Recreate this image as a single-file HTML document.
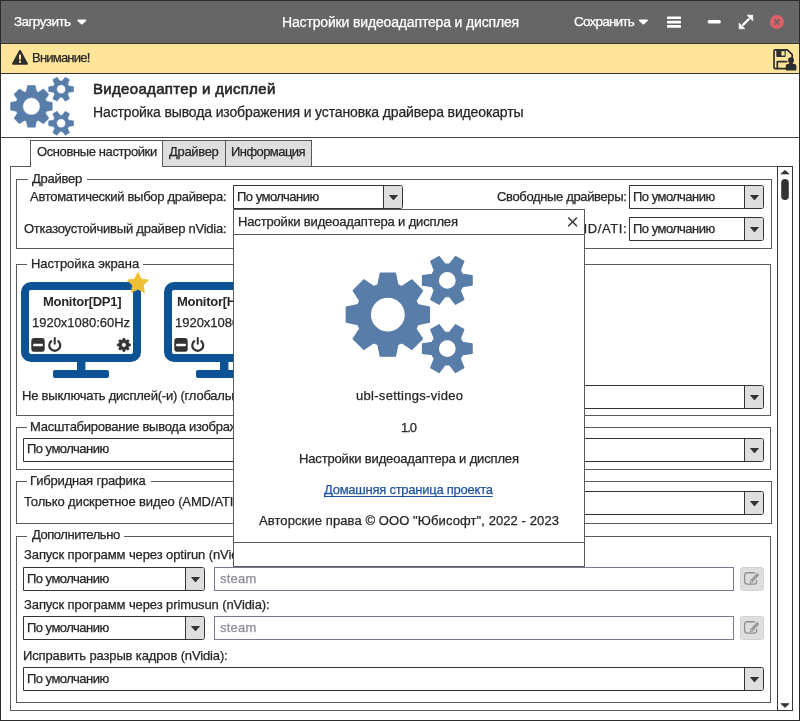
<!DOCTYPE html>
<html lang="ru"><head><meta charset="utf-8"><title>Настройки видеоадаптера и дисплея</title>
<style>
*{box-sizing:border-box;margin:0;padding:0}
html,body{width:800px;height:721px;overflow:hidden;background:#fff}
body{font-family:"Liberation Sans",sans-serif;font-size:13px;color:#262626;position:relative}
.a{position:absolute}
.t{will-change:transform;-webkit-text-stroke:0.25px currentColor;position:absolute;white-space:nowrap;line-height:20px;height:20px}
#win{position:absolute;left:0;top:0;width:800px;height:721px;background:#fff;overflow:hidden}
.wb{position:absolute;background:#2b2b2b}
#tb{position:absolute;left:0;top:0;width:800px;height:43px;background:#666666}
#tbl{position:absolute;left:0;top:43px;width:800px;height:1px;background:#333}
#warn{position:absolute;left:0;top:44px;width:800px;height:29px;background:#ffe599}
#warnl{position:absolute;left:0;top:73px;width:800px;height:1px;background:#333}
#hdl{position:absolute;left:0;top:137px;width:800px;height:1px;background:#444}
.fr{position:absolute;border:1px solid #5a5a5a;background:transparent}
.lg{position:absolute;background:#fff;height:3px}
.cb{position:absolute;height:24px;border:1px solid #333;border-radius:0 2.5px 2.5px 0;background:#fff}
.cb i{position:absolute;right:0;top:0;width:19px;height:22px;border-left:1px solid #333;background:#dedede;border-radius:0 1.5px 1.5px 0}
.cb i:after{content:"";position:absolute;left:4.8px;top:8.7px;width:9.4px;height:5.4px;background:#333;clip-path:polygon(0 6%,4% 0,96% 0,100% 6%,54% 100%,46% 100%)}
.en{position:absolute;height:23px;border:1px solid #7c7c8e;background:#fff}
.eb{position:absolute;width:24px;height:24px;border:1px solid #d2d2d2;border-radius:3px;background:#dedede}
.tab{position:absolute;top:140px;height:27px;border:1px solid #5a5a5a;background:#dedede}
</style></head><body>
<div id="win">
<div id="tb"></div><div id="tbl"></div><div id="warn"></div><div id="warnl"></div><div id="hdl"></div>

<!-- titlebar icons -->
<svg class="a" style="left:0;top:0" width="800" height="44" viewBox="0 0 800 44">
 <path d="M78.2 19.6 h7.2 a0.9 0.9 0 0 1 0.65 1.5 l-3.6 3.2 a0.9 0.9 0 0 1 -1.3 0 l-3.6 -3.2 a0.9 0.9 0 0 1 0.65 -1.5z" fill="#fff"/>
 <path d="M639.8 19.5 h7.2 a0.9 0.9 0 0 1 0.65 1.5 l-3.6 3.2 a0.9 0.9 0 0 1 -1.3 0 l-3.6 -3.2 a0.9 0.9 0 0 1 0.65 -1.5z" fill="#fff"/>
 <g fill="#fff"><rect x="667" y="16.4" width="14" height="2.7" rx="0.6"/><rect x="667" y="20.75" width="14" height="2.7" rx="0.6"/><rect x="667" y="25.1" width="14" height="2.7" rx="0.6"/></g>
 <rect x="707.6" y="20" width="13.2" height="3.6" rx="1.6" fill="#fff"/>
 <g stroke="#fff" fill="#fff">
  <path d="M742.5 25.4 L749.4 18.5" fill="none" stroke-width="2.3"/>
  <path d="M747.2 15.2 h5.5 v5.5z" stroke-width="0.8" stroke-linejoin="round"/>
  <path d="M739.2 23.2 v5.5 h5.5z" stroke-width="0.8" stroke-linejoin="round"/>
 </g>
 <circle cx="776.9" cy="22" r="6.9" fill="#e06068"/>
 <path d="M774.8 19.9 l4.2 4.2 M779 19.9 l-4.2 4.2" stroke="#666666" stroke-width="2" stroke-linecap="round"/>
</svg>

<!-- banner icons -->
<svg class="a" style="left:0;top:44px" width="800" height="29" viewBox="0 44 800 29">
 <path d="M20.9 50.5 L27.7 63.1 a1.1 1.1 0 0 1 -1 1.7 H13.3 a1.1 1.1 0 0 1 -1 -1.7 L19.1 50.5 a1.05 1.05 0 0 1 1.8 0z" fill="#2e2e2e"/>
 <rect x="19" y="54.6" width="2" height="5" fill="#ffe599"/><rect x="19" y="60.7" width="2" height="2" fill="#ffe599"/>
 <!-- save icon -->
 <g fill="none" stroke="#2e2e2e" stroke-width="1.7" stroke-linejoin="round">
  <path d="M775.2 49.9 h12.2 l4.8 4.8 v8 M786 68.6 h-10.8 a1.2 1.2 0 0 1 -1.2 -1.2 v-16.3 a1.2 1.2 0 0 1 1.2 -1.2"/>
  <path d="M777.3 68.6 v-6.9 h10"/>
 </g>
 <rect x="776.3" y="49.6" width="9.4" height="7.3" rx="0.9" fill="#2e2e2e"/>
 <rect x="781.4" y="51.2" width="3.2" height="4.4" fill="#ffe599"/>
 <circle cx="791" cy="60.3" r="3" fill="#2e2e2e"/><rect x="789.2" y="62" width="3.6" height="3" fill="#2e2e2e"/>
 <path d="M785.7 69.4 v-2.9 a2.8 2.8 0 0 1 2.8 -2.8 h5.1 a2.8 2.8 0 0 1 2.8 2.8 v2.9 a1.2 1.2 0 0 1 -1.2 1.2 h-8.3 a1.2 1.2 0 0 1 -1.2 -1.2z" fill="#2e2e2e"/>
</svg>

<!-- header gears (half-size) -->
<svg class="a" style="left:10px;top:73.5px" width="64" height="64" viewBox="0 0 128 128">
 <g fill="#587da9" stroke="#587da9" stroke-width="1.2" stroke-linejoin="round" fill-rule="evenodd">
 <path d="M72.72 54.65 L84.47 57.09 L84.47 72.21 L72.72 74.65 L71.04 78.71 L77.63 88.73 L66.93 99.43 L56.91 92.84 L52.85 94.52 L50.41 106.27 L35.29 106.27 L32.85 94.52 L28.79 92.84 L18.77 99.43 L8.07 88.73 L14.66 78.71 L12.98 74.65 L1.23 72.21 L1.23 57.09 L12.98 54.65 L14.66 50.59 L8.07 40.57 L18.77 29.87 L28.79 36.46 L32.85 34.78 L35.29 23.03 L50.41 23.03 L52.85 34.78 L56.91 36.46 L66.93 29.87 L77.63 40.57 L71.04 50.59 Z M25.35 64.65 a17.50 17.50 0 1 0 35.00 0 a17.50 17.50 0 1 0 -35.00 0 Z"/><path d="M117.60 24.22 L127.14 25.57 L127.14 35.23 L117.60 36.58 L115.30 40.56 L118.90 49.49 L110.54 54.32 L104.60 46.74 L100.00 46.74 L94.06 54.32 L85.70 49.49 L89.30 40.56 L87.00 36.58 L77.46 35.23 L77.46 25.57 L87.00 24.22 L89.30 20.24 L85.70 11.31 L94.06 6.48 L100.00 14.06 L104.60 14.06 L110.54 6.48 L118.90 11.31 L115.30 20.24 Z M93.30 30.40 a9.00 9.00 0 1 0 18.00 0 a9.00 9.00 0 1 0 -18.00 0 Z"/><path d="M117.60 92.42 L127.14 93.77 L127.14 103.43 L117.60 104.78 L115.30 108.76 L118.90 117.69 L110.54 122.52 L104.60 114.94 L100.00 114.94 L94.06 122.52 L85.70 117.69 L89.30 108.76 L87.00 104.78 L77.46 103.43 L77.46 93.77 L87.00 92.42 L89.30 88.44 L85.70 79.51 L94.06 74.68 L100.00 82.26 L104.60 82.26 L110.54 74.68 L118.90 79.51 L115.30 88.44 Z M93.30 98.60 a9.00 9.00 0 1 0 18.00 0 a9.00 9.00 0 1 0 -18.00 0 Z"/></g>
</svg>

<!-- notebook -->
<div class="a" style="left:10px;top:166px;width:783px;height:545px;border:1px solid #5a5a5a"></div>
<div class="tab" style="left:30px;width:133px;height:27px;background:#fff;border-bottom:none"></div><div class="a" style="left:31px;top:166px;width:131px;height:1px;background:#fff"></div>
<div class="tab" style="left:162px;width:64px"></div>
<div class="tab" style="left:225px;width:87px"></div>
<!-- scrollbar -->
<div class="a" style="left:777px;top:166px;width:16px;height:545px;border:1px solid #383838"></div>
<svg class="a" style="left:778px;top:167px" width="14" height="543" viewBox="0 0 14 543">
 <path d="M7 3.2 L11.2 7 H2.8z" fill="#333" stroke="#333" stroke-width="0.6" stroke-linejoin="round"/>
 <rect x="3.2" y="12" width="7.6" height="21" rx="3.8" fill="#333"/>
 <path d="M7 540.6 L11.2 536.6 H2.8z" fill="#333" stroke="#333" stroke-width="0.6" stroke-linejoin="round"/>
</svg>

<!-- frames -->
<div class="fr" style="left:16px;top:179px;width:756px;height:70px"></div>
<div class="lg" style="left:28px;top:178px;width:59px"></div>
<div class="fr" style="left:16px;top:264px;width:755px;height:152px"></div>
<div class="lg" style="left:27px;top:263px;width:116px"></div>
<div class="fr" style="left:16px;top:427px;width:755px;height:43px"></div>
<div class="lg" style="left:27px;top:426px;width:240px"></div>
<div class="fr" style="left:16px;top:481px;width:756px;height:43px"></div>
<div class="lg" style="left:27px;top:480px;width:124px"></div>
<div class="fr" style="left:16px;top:536px;width:755px;height:167px"></div>
<div class="lg" style="left:27px;top:535px;width:97px"></div>

<!-- combos -->
<div class="cb" style="left:233px;top:185px;width:170px"><i></i></div>
<div class="cb" style="left:629px;top:185px;width:135px"><i></i></div>
<div class="cb" style="left:233px;top:217px;width:170px"><i></i></div>
<div class="cb" style="left:629px;top:217px;width:135px"><i></i></div>
<div class="cb" style="left:260px;top:385px;width:504px"><i></i></div>
<div class="cb" style="left:23px;top:438px;width:741px"><i></i></div>
<div class="cb" style="left:300px;top:491px;width:464px"><i></i></div>
<div class="cb" style="left:23px;top:567px;width:182px"><i></i></div>
<div class="cb" style="left:23px;top:616px;width:182px"><i></i></div>
<div class="cb" style="left:23px;top:667px;width:741px"><i></i></div>
<div class="en" style="left:214px;top:567px;width:520px;height:24px"></div>
<div class="en" style="left:214px;top:616px;width:520px;height:24px"></div>
<div class="eb" style="left:740px;top:567px"></div>
<div class="eb" style="left:740px;top:616px"></div>
<svg class="a" style="left:740px;top:567px" width="24" height="24" viewBox="0 0 24 24"><use href="#edit"/></svg>
<svg class="a" style="left:740px;top:616px" width="24" height="24" viewBox="0 0 24 24"><use href="#edit"/></svg>
<svg width="0" height="0" style="position:absolute"><defs>
 <g id="edit" fill="none" stroke="#8f8f8f" stroke-linejoin="round">
  <path d="M14.6 5.75 H7.15 a2.5 2.5 0 0 0 -2.5 2.5 v6.35 a2.5 2.5 0 0 0 2.5 2.5 h7 a2.5 2.5 0 0 0 2.5 -2.5 V13.4" stroke-width="1.3" stroke-linecap="round"/>
  <path d="M11.9 13.9 L18.2 6.9" stroke-width="3.1" stroke="#9a9a9a"/>
  <path d="M10.2 15.8 l0.5 -2.9 2.3 2.1z" fill="#8f8f8f" stroke-width="0.8"/>
  <circle cx="11.5" cy="14.4" r="0.7" fill="#e4e4e4" stroke="none"/>
 </g>
 <g id="mon">
  <rect x="4" y="4" width="112" height="72" rx="6" fill="#fff" stroke="#0b5394" stroke-width="8"/>
  <rect x="56" y="80" width="8.4" height="8.5" fill="#0b5394"/>
  <rect x="32" y="88" width="56" height="8" rx="2" fill="#0b5394"/>
  <rect x="10.3" y="56.1" width="13.4" height="13.6" rx="2.8" fill="#333"/>
  <rect x="12.1" y="61.75" width="9.8" height="2.6" rx="0.8" fill="#fff"/>
  <g fill="none" stroke="#333" stroke-width="2.2" stroke-linecap="round">
   <path d="M30.21 59.09 a5.5 5.5 0 1 0 7.08 0"/><path d="M33.75 56.1 v5.7" stroke-width="2"/>
  </g>
 </g>
</defs></svg>

<!-- monitors -->
<svg class="a" style="left:21px;top:282px" width="120" height="97" viewBox="0 0 120 97"><use href="#mon"/>
 <g transform="translate(102.9,62.9)" fill="#333" stroke="#333" stroke-width="0.6" stroke-linejoin="round" fill-rule="evenodd"><path d="M4.97 -1.33 L6.63 -0.93 L6.63 0.93 L4.97 1.33 L4.46 2.58 L5.35 4.03 L4.03 5.35 L2.58 4.46 L1.33 4.97 L0.93 6.63 L-0.93 6.63 L-1.33 4.97 L-2.57 4.46 L-4.03 5.35 L-5.35 4.03 L-4.46 2.57 L-4.97 1.33 L-6.63 0.93 L-6.63 -0.93 L-4.97 -1.33 L-4.46 -2.57 L-5.35 -4.03 L-4.03 -5.35 L-2.58 -4.46 L-1.33 -4.97 L-0.93 -6.63 L0.93 -6.63 L1.33 -4.97 L2.58 -4.46 L4.03 -5.35 L5.35 -4.03 L4.46 -2.58 Z M-2.30 0.00 a2.30 2.30 0 1 0 4.60 0 a2.30 2.30 0 1 0 -4.60 0 Z"/></g>
</svg>
<svg class="a" style="left:164px;top:282px" width="120" height="97" viewBox="0 0 120 97"><use href="#mon"/></svg>
<svg class="a" style="left:126px;top:270px" width="24" height="24" viewBox="0 0 24 24">
 <path d="M11.90 2.45 L15.19 9.02 L22.46 10.12 L17.23 15.28 L18.42 22.53 L11.90 19.15 L5.38 22.53 L6.57 15.28 L1.34 10.12 L8.61 9.02Z" fill="#efc035" stroke="#efc035" stroke-width="0.9" stroke-linejoin="round"/>
</svg>

<div class="t" style="left:14.00px;top:12.00px;font-size:13.5px;color:#ffffff;letter-spacing:-0.576px;">Загрузить</div>
<div class="t" style="left:282.00px;top:12.00px;font-size:14px;color:#ffffff;letter-spacing:-0.156px;">Настройки видеоадаптера и дисплея</div>
<div class="t" style="left:574.30px;top:12.00px;font-size:13.5px;color:#ffffff;letter-spacing:-0.794px;">Сохранить</div>
<div class="t" style="left:31.75px;top:48.00px;font-size:13px;color:#262626;letter-spacing:-0.788px;">Внимание!</div>
<div class="t" style="left:93.00px;top:79.00px;font-size:15px;color:#262626;letter-spacing:0.318px;-webkit-text-stroke:0.6px #262626;">Видеоадаптер и дисплей</div>
<div class="t" style="left:93.00px;top:102.00px;font-size:14px;color:#262626;letter-spacing:-0.134px;">Настройка вывода изображения и установка драйвера видеокарты</div>
<div class="t" style="left:36.60px;top:142.00px;font-size:13px;color:#262626;letter-spacing:-0.392px;">Основные настройки</div>
<div class="t" style="left:169.00px;top:142.00px;font-size:13px;color:#262626;letter-spacing:-0.319px;">Драйвер</div>
<div class="t" style="left:230.50px;top:142.00px;font-size:13px;color:#262626;letter-spacing:-0.562px;">Информация</div>
<div class="t" style="left:32.00px;top:169.00px;font-size:13px;color:#262626;letter-spacing:-0.253px;">Драйвер</div>
<div class="t" style="left:30.00px;top:187.00px;font-size:13px;color:#262626;letter-spacing:-0.285px;">Автоматический выбор драйвера:</div>
<div class="t" style="left:236.50px;top:187.00px;font-size:13px;color:#262626;letter-spacing:-0.515px;">По умолчанию</div>
<div class="t" style="left:496.80px;top:187.00px;font-size:13px;color:#262626;letter-spacing:-0.355px;">Свободные драйверы:</div>
<div class="t" style="left:632.50px;top:187.00px;font-size:13px;color:#262626;letter-spacing:-0.515px;">По умолчанию</div>
<div class="t" style="left:24.00px;top:219.00px;font-size:13px;color:#262626;letter-spacing:-0.238px;">Отказоустойчивый драйвер nVidia:</div>
<div class="t" style="left:567.00px;top:219.00px;font-size:13px;color:#262626;letter-spacing:0.606px;">AMD/ATI:</div>
<div class="t" style="left:632.50px;top:219.00px;font-size:13px;color:#262626;letter-spacing:-0.515px;">По умолчанию</div>
<div class="t" style="left:30.50px;top:254.00px;font-size:13px;color:#262626;letter-spacing:-0.045px;">Настройка экрана</div>
<div class="t" style="left:43.00px;top:292.00px;font-size:13px;color:#262626;font-weight:700;letter-spacing:-0.279px;-webkit-text-stroke:0;">Monitor[DP1]</div>
<div class="t" style="left:32.00px;top:313.00px;font-size:13px;color:#262626;letter-spacing:-0.015px;">1920x1080:60Hz</div>
<div class="t" style="left:176.60px;top:292.00px;font-size:13px;color:#262626;font-weight:700;letter-spacing:-0.279px;-webkit-text-stroke:0;">Monitor[HDMI1]</div>
<div class="t" style="left:175.00px;top:313.00px;font-size:13px;color:#262626;letter-spacing:-0.015px;">1920x1080:60Hz</div>
<div class="t" style="left:21.60px;top:386.00px;font-size:13px;color:#262626;letter-spacing:-0.210px;">Не выключать дисплей(-и) (глобально):</div>
<div class="t" style="left:30.00px;top:417.00px;font-size:13px;color:#262626;letter-spacing:-0.260px;">Масштабирование вывода изображения</div>
<div class="t" style="left:27.00px;top:439.00px;font-size:13px;color:#262626;letter-spacing:-0.524px;">По умолчанию</div>
<div class="t" style="left:30.00px;top:471.00px;font-size:13px;color:#262626;letter-spacing:-0.174px;">Гибридная графика</div>
<div class="t" style="left:23.50px;top:492.00px;font-size:13px;color:#262626;letter-spacing:-0.119px;">Только дискретное видео (AMD/ATI):</div>
<div class="t" style="left:31.60px;top:525.00px;font-size:13px;color:#262626;letter-spacing:-0.453px;">Дополнительно</div>
<div class="t" style="left:23.50px;top:545.00px;font-size:13px;color:#262626;letter-spacing:-0.096px;">Запуск программ через optirun (nVidia):</div>
<div class="t" style="left:27.00px;top:569.00px;font-size:13px;color:#262626;letter-spacing:-0.524px;">По умолчанию</div>
<div class="t" style="left:219.70px;top:569.00px;font-size:13px;color:#8b8b98;letter-spacing:0.232px;">steam</div>
<div class="t" style="left:23.50px;top:595.00px;font-size:13px;color:#262626;letter-spacing:-0.099px;">Запуск программ через primusun (nVidia):</div>
<div class="t" style="left:27.00px;top:618.00px;font-size:13px;color:#262626;letter-spacing:-0.524px;">По умолчанию</div>
<div class="t" style="left:219.70px;top:618.00px;font-size:13px;color:#8b8b98;letter-spacing:0.232px;">steam</div>
<div class="t" style="left:22.50px;top:646.00px;font-size:13px;color:#262626;letter-spacing:-0.139px;">Исправить разрыв кадров (nVidia):</div>
<div class="t" style="left:27.00px;top:669.00px;font-size:13px;color:#262626;letter-spacing:-0.524px;">По умолчанию</div>

<!-- dialog -->
<div class="a" style="left:233px;top:209px;width:352px;height:358px;border:1px solid #5a5a5a;background:#fff"></div>
<div class="a" style="left:234px;top:234px;width:350px;height:1px;background:#5a5a5a"></div>
<div class="a" style="left:234px;top:542px;width:350px;height:1px;background:#5a5a5a"></div>
<svg class="a" style="left:566px;top:215px" width="14" height="14" viewBox="0 0 14 14"><path d="M2.7 3 l7.8 7.8 M10.5 3 l-7.8 7.8" stroke="#3c3c3c" stroke-width="1.6" stroke-linecap="round"/></svg>
<svg class="a" style="left:345px;top:250px" width="128" height="128" viewBox="0 0 128 128">
 <g fill="#587da9" stroke="#587da9" stroke-width="1.2" stroke-linejoin="round" fill-rule="evenodd">
 <path d="M72.72 54.65 L84.47 57.09 L84.47 72.21 L72.72 74.65 L71.04 78.71 L77.63 88.73 L66.93 99.43 L56.91 92.84 L52.85 94.52 L50.41 106.27 L35.29 106.27 L32.85 94.52 L28.79 92.84 L18.77 99.43 L8.07 88.73 L14.66 78.71 L12.98 74.65 L1.23 72.21 L1.23 57.09 L12.98 54.65 L14.66 50.59 L8.07 40.57 L18.77 29.87 L28.79 36.46 L32.85 34.78 L35.29 23.03 L50.41 23.03 L52.85 34.78 L56.91 36.46 L66.93 29.87 L77.63 40.57 L71.04 50.59 Z M25.35 64.65 a17.50 17.50 0 1 0 35.00 0 a17.50 17.50 0 1 0 -35.00 0 Z"/><path d="M117.60 24.22 L127.14 25.57 L127.14 35.23 L117.60 36.58 L115.30 40.56 L118.90 49.49 L110.54 54.32 L104.60 46.74 L100.00 46.74 L94.06 54.32 L85.70 49.49 L89.30 40.56 L87.00 36.58 L77.46 35.23 L77.46 25.57 L87.00 24.22 L89.30 20.24 L85.70 11.31 L94.06 6.48 L100.00 14.06 L104.60 14.06 L110.54 6.48 L118.90 11.31 L115.30 20.24 Z M93.30 30.40 a9.00 9.00 0 1 0 18.00 0 a9.00 9.00 0 1 0 -18.00 0 Z"/><path d="M117.60 92.42 L127.14 93.77 L127.14 103.43 L117.60 104.78 L115.30 108.76 L118.90 117.69 L110.54 122.52 L104.60 114.94 L100.00 114.94 L94.06 122.52 L85.70 117.69 L89.30 108.76 L87.00 104.78 L77.46 103.43 L77.46 93.77 L87.00 92.42 L89.30 88.44 L85.70 79.51 L94.06 74.68 L100.00 82.26 L104.60 82.26 L110.54 74.68 L118.90 79.51 L115.30 88.44 Z M93.30 98.60 a9.00 9.00 0 1 0 18.00 0 a9.00 9.00 0 1 0 -18.00 0 Z"/></g>
</svg>
<div class="t" style="left:237.75px;top:212.00px;font-size:13px;color:#262626;letter-spacing:-0.153px;">Настройки видеоадаптера и дисплея</div>
<div class="t" style="left:355.60px;top:386.00px;font-size:13px;color:#262626;letter-spacing:0.297px;">ubl-settings-video</div>
<div class="t" style="left:401.20px;top:418.00px;font-size:13px;color:#262626;letter-spacing:-1.021px;">1.0</div>
<div class="t" style="left:298.50px;top:449.00px;font-size:13px;color:#262626;letter-spacing:-0.154px;">Настройки видеоадаптера и дисплея</div>
<div class="t" style="left:324.00px;top:480.00px;font-size:13px;color:#1a539f;letter-spacing:-0.248px;text-decoration:underline;text-decoration-skip-ink:none;text-underline-offset:2.4px;text-decoration-thickness:1.2px;">Домашняя страница проекта</div>
<div class="t" style="left:259.00px;top:511.00px;font-size:13px;color:#262626;letter-spacing:0.091px;">Авторские права © ООО "Юбисофт", 2022 - 2023</div>
<div class="wb" style="left:0;top:0;width:800px;height:1px"></div><div class="wb" style="left:0;top:720px;width:800px;height:1px"></div><div class="wb" style="left:0;top:0;width:1px;height:721px"></div><div class="wb" style="left:799px;top:0;width:1px;height:721px"></div>
</div>
</body></html>
